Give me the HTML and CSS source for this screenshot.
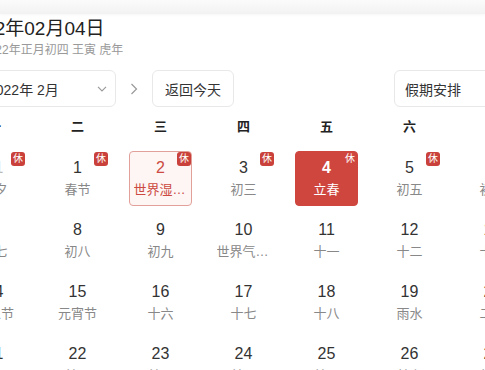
FILE: index.html
```html
<!DOCTYPE html>
<html>
<head>
  <title>万年历</title>
  <link rel="stylesheet" href="styles.css">
</head>
<body>
  <div class="topbar"></div>
  <div class="calendar">
    <div class="head">
      <div class="date-title">2022年02月04日</div>
      <div class="date-sub">2022年正月初四 王寅 虎年</div>
    </div>

    <div class="controls">
      <span class="arrow prev">
        <svg width="8" height="12" viewBox="0 0 8 12"><path d="M6.5 1 L1.5 6 L6.5 11" fill="none" stroke="#999" stroke-width="1.2"/></svg>
      </span>
      <div class="select month-select">
        <span>2022年 2月</span>
        <svg width="10" height="6" viewBox="0 0 10 6"><path d="M1 0.8 L5 5 L9 0.8" fill="none" stroke="#999" stroke-width="1.1"/></svg>
      </div>
      <span class="arrow next">
        <svg width="8" height="12" viewBox="0 0 8 12"><path d="M1.5 1 L6.5 6 L1.5 11" fill="none" stroke="#999" stroke-width="1.2"/></svg>
      </span>
      <button class="btn">返回今天</button>
      <div class="select holiday-select">
        <span>假期安排</span>
        <svg width="10" height="6" viewBox="0 0 10 6"><path d="M1 0.8 L5 5 L9 0.8" fill="none" stroke="#999" stroke-width="1.1"/></svg>
      </div>
    </div>

    <div class="week">
      <span>一</span><span>二</span><span>三</span><span>四</span><span>五</span><span>六</span><span>日</span>
    </div>

    <div class="days">
      <div class="cell"><div class="day other"><i class="rest">休</i><b>31</b><em>除夕</em></div></div>
      <div class="cell"><div class="day"><i class="rest">休</i><b>1</b><em>春节</em></div></div>
      <div class="cell"><div class="day today"><i class="rest">休</i><b>2</b><em>世界湿地日</em></div></div>
      <div class="cell"><div class="day"><i class="rest">休</i><b>3</b><em>初三</em></div></div>
      <div class="cell"><div class="day active"><i class="rest">休</i><b>4</b><em>立春</em></div></div>
      <div class="cell"><div class="day"><i class="rest">休</i><b>5</b><em>初五</em></div></div>
      <div class="cell"><div class="day"><i class="rest">休</i><b>6</b><em>初六</em></div></div>

      <div class="cell"><div class="day"><b>7</b><em>初七</em></div></div>
      <div class="cell"><div class="day"><b>8</b><em>初八</em></div></div>
      <div class="cell"><div class="day"><b>9</b><em>初九</em></div></div>
      <div class="cell"><div class="day"><b>10</b><em>世界气象日</em></div></div>
      <div class="cell"><div class="day"><b>11</b><em>十一</em></div></div>
      <div class="cell"><div class="day"><b>12</b><em>十二</em></div></div>
      <div class="cell"><div class="day"><b>13</b><em>十三</em></div></div>

      <div class="cell"><div class="day"><b>14</b><em>情人节</em></div></div>
      <div class="cell"><div class="day"><b>15</b><em>元宵节</em></div></div>
      <div class="cell"><div class="day"><b>16</b><em>十六</em></div></div>
      <div class="cell"><div class="day"><b>17</b><em>十七</em></div></div>
      <div class="cell"><div class="day"><b>18</b><em>十八</em></div></div>
      <div class="cell"><div class="day"><b>19</b><em>雨水</em></div></div>
      <div class="cell"><div class="day"><b>20</b><em>二十</em></div></div>

      <div class="cell"><div class="day"><b>21</b><em>廿一</em></div></div>
      <div class="cell"><div class="day"><b>22</b><em>廿二</em></div></div>
      <div class="cell"><div class="day"><b>23</b><em>廿三</em></div></div>
      <div class="cell"><div class="day"><b>24</b><em>廿四</em></div></div>
      <div class="cell"><div class="day"><b>25</b><em>廿五</em></div></div>
      <div class="cell"><div class="day"><b>26</b><em>廿六</em></div></div>
      <div class="cell"><div class="day"><b>27</b><em>廿七</em></div></div>
    </div>
  </div>
</body>
</html>
```

FILE: styles.css
```css
* {box-sizing: border-box}
html, body {
  margin: 0;
  background: #fff;
  overflow: hidden;
  font-family: "Liberation Sans", "Noto Sans CJK SC", sans-serif;
  color: #333;
}
.topbar {
  height: 14px;
  background: linear-gradient(#fbfbfb, #f2f2f2);
  box-shadow: 0 1px 3px rgba(0,0,0,0.04);
}
.calendar {
  width: 581px;
  margin-left: -47px;
}
.head {padding: 2px 10px 0 10px;}
.date-title {
  font-size: 19px;
  line-height: 26px;
  color: #222;
}
.date-sub {
  font-size: 12px;
  line-height: 16px;
  color: #999;
  padding-left: 19px;
}

.controls {
  display: flex;
  align-items: center;
  height: 37px;
  margin-top: 12px;
  padding: 0 10px;
}
.arrow {
  display: flex;
  justify-content: center;
  align-items: center;
}
.arrow.prev {width: 14px;}
.arrow.next {width: 20px; margin: 0 8px;}
.select, .btn {
  height: 37px;
  border: 1px solid #e8e8e8;
  border-radius: 6px;
  background: #fff;
  font-family: inherit;
  font-size: 14px;
  color: #333;
}
.select {
  display: flex;
  align-items: center;
  justify-content: space-between;
  padding: 0 8px 0 10px;
}
.month-select {width: 139px;}
.btn {
  width: 82px;
  padding: 0;
}
.holiday-select {
  width: 130px;
  margin-left: auto;
}

.week {
  display: grid;
  grid-template-columns: repeat(7, 83px);
  height: 36px;
  align-items: center;
  text-align: center;
  font-size: 13px;
  font-weight: bold;
  color: #222;
}

.days {
  display: grid;
  grid-template-columns: repeat(7, 83px);
  grid-auto-rows: 62px;
}
.cell {padding: 8px 10px 0 10px;}
.day {
  position: relative;
  height: 55px;
  border: 1px solid transparent;
  border-radius: 4px;
  text-align: center;
  padding-top: 6px;
}
.day b {
  display: block;
  font-weight: normal;
  font-size: 16px;
  line-height: 20px;
  color: #333;
}
.day em {
  display: block;
  font-style: normal;
  font-size: 13px;
  line-height: 18px;
  margin: 3px auto 0 auto;
  width: 54px;
  color: #888;
  white-space: nowrap;
  overflow: hidden;
  text-overflow: ellipsis;
}
.day.other b {color: #bbb;}
.rest {
  position: absolute;
  top: 0;
  right: 0;
  width: 14px;
  height: 14px;
  border-radius: 3px;
  background: #c9413a;
  color: #fff;
  font-style: normal;
  font-size: 10px;
  line-height: 14px;
  text-align: center;
}
.day.today {
  border-color: #e2a09a;
  background: #fdf6f5;
}
.day.today b, .day.today em {color: #cc4a41;}
.day.active {
  background: #cf463f;
  border-color: #cf463f;
}
.day.active b, .day.active em {color: #fff;}
.day.active b {font-weight: bold;}
.day.active .rest {background: transparent;}
```
